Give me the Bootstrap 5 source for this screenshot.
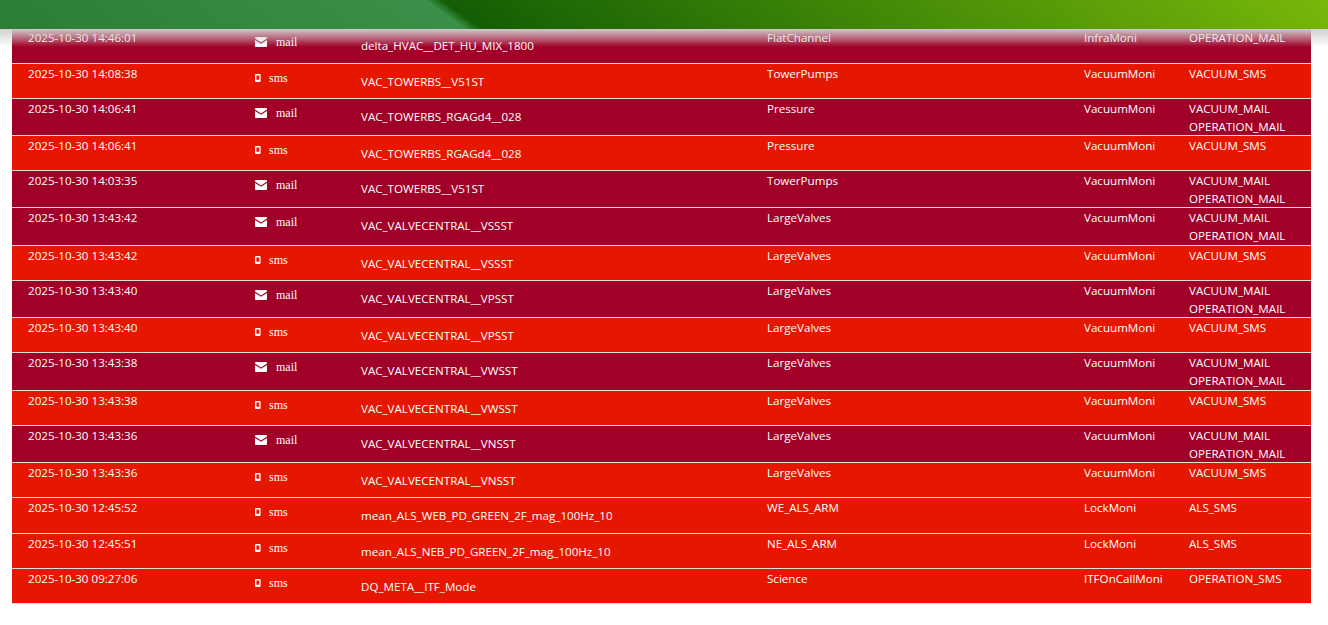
<!DOCTYPE html>
<html lang="en"><head><meta charset="utf-8">
<link href="https://cdn.jsdelivr.net/npm/bootstrap@5.3.0/dist/css/bootstrap.min.css" rel="stylesheet">
<style>
html,body{height:100%;overflow:hidden;background:#fff}
body{font-family:"Open Sans","Noto Sans","Liberation Sans",sans-serif;font-size:11.6px;line-height:18px;color:#fff}
.top-strip{position:fixed;top:0;left:0;right:0;height:29px;z-index:3;background:linear-gradient(36deg,#2c7d36 0,#3a9048 34%,#135e05 35.2%,#78b80a 100%)}
.top-fade{position:fixed;top:29px;left:0;right:0;height:18px;z-index:2;background:linear-gradient(180deg,rgba(208,208,208,.97) 0,rgba(208,208,208,.6) 40%,rgba(208,208,208,0) 100%)}
.page-wrap{padding:28.45px 17px 0 12px}
.alarm-table{table-layout:fixed;width:1299px;border-collapse:separate;border-spacing:0;margin:0}
.alarm-table td{padding:0 16px;vertical-align:top;border-bottom:1px solid #e4dede;color:#fff;background:transparent}
.r-mail{background:#a10028}.r-sms{background:#e61700}
.r-one{height:35.1px}.r-two{height:37.33px}.r-long{height:35.5px}
.w1{width:227px}.w2{width:106px}.w3{width:406px}.w4{width:317px}.w5{width:105px}.w6{width:138px}
.cell-text{padding-top:1px;margin-bottom:-1px}
.cell-name{padding-top:9px;margin-bottom:-9px}
.cell-type{padding-top:5px;margin-bottom:-5px;display:flex;align-items:center;font-family:"Liberation Serif",serif;font-size:12px;line-height:18px}
.ic-mail{width:12px;height:10px;margin-right:9px;flex:none}
.ic-sms{width:6px;height:8px;margin-right:8px;flex:none}
</style></head><body>
<div class="top-strip"></div><div class="top-fade"></div>
<div class="page-wrap">
<table class="alarm-table">
<colgroup><col class="w1"><col class="w2"><col class="w3"><col class="w4"><col class="w5"><col class="w6"></colgroup>
<tbody id="rows"></tbody></table></div>
<script>
const data=[
["2025-10-30 14:46:01","m","delta_HVAC__DET_HU_MIX_1800","FlatChannel","InfraMoni",["OPERATION_MAIL"]],
["2025-10-30 14:08:38","s","VAC_TOWERBS__V51ST","TowerPumps","VacuumMoni",["VACUUM_SMS"]],
["2025-10-30 14:06:41","m","VAC_TOWERBS_RGAGd4__028","Pressure","VacuumMoni",["VACUUM_MAIL","OPERATION_MAIL"]],
["2025-10-30 14:06:41","s","VAC_TOWERBS_RGAGd4__028","Pressure","VacuumMoni",["VACUUM_SMS"]],
["2025-10-30 14:03:35","m","VAC_TOWERBS__V51ST","TowerPumps","VacuumMoni",["VACUUM_MAIL","OPERATION_MAIL"]],
["2025-10-30 13:43:42","m","VAC_VALVECENTRAL__VSSST","LargeValves","VacuumMoni",["VACUUM_MAIL","OPERATION_MAIL"]],
["2025-10-30 13:43:42","s","VAC_VALVECENTRAL__VSSST","LargeValves","VacuumMoni",["VACUUM_SMS"]],
["2025-10-30 13:43:40","m","VAC_VALVECENTRAL__VPSST","LargeValves","VacuumMoni",["VACUUM_MAIL","OPERATION_MAIL"]],
["2025-10-30 13:43:40","s","VAC_VALVECENTRAL__VPSST","LargeValves","VacuumMoni",["VACUUM_SMS"]],
["2025-10-30 13:43:38","m","VAC_VALVECENTRAL__VWSST","LargeValves","VacuumMoni",["VACUUM_MAIL","OPERATION_MAIL"]],
["2025-10-30 13:43:38","s","VAC_VALVECENTRAL__VWSST","LargeValves","VacuumMoni",["VACUUM_SMS"]],
["2025-10-30 13:43:36","m","VAC_VALVECENTRAL__VNSST","LargeValves","VacuumMoni",["VACUUM_MAIL","OPERATION_MAIL"]],
["2025-10-30 13:43:36","s","VAC_VALVECENTRAL__VNSST","LargeValves","VacuumMoni",["VACUUM_SMS"]],
["2025-10-30 12:45:52","s","mean_ALS_WEB_PD_GREEN_2F_mag_100Hz_10","WE_ALS_ARM","LockMoni",["ALS_SMS"]],
["2025-10-30 12:45:51","s","mean_ALS_NEB_PD_GREEN_2F_mag_100Hz_10","NE_ALS_ARM","LockMoni",["ALS_SMS"]],
["2025-10-30 09:27:06","s","DQ_META__ITF_Mode","Science","ITFOnCallMoni",["OPERATION_SMS"]]];
const mail='<svg class="ic-mail" viewBox="0 0 12 10"><path fill="#fff" d="M1 0h10a1 1 0 0 1 1 1v.6L6 5.4 0 1.6V1a1 1 0 0 1 1-1zM0 3l6 3.8L12 3v6a1 1 0 0 1-1 1H1a1 1 0 0 1-1-1z"/></svg>';
const sms='<svg class="ic-sms" viewBox="0 0 6 8"><path fill="#fff" fill-rule="evenodd" d="M1 0h3.6a1 1 0 0 1 1 1v6a1 1 0 0 1-1 1H1a1 1 0 0 1-1-1V1a1 1 0 0 1 1-1zM1.4 1.5v4.2h2.8V1.500z"/></svg>';
document.getElementById('rows').innerHTML=data.map(d=>{
  const h=d[5].length>1?'r-two':(d[2].startsWith('mean')?'r-long':'r-one');
  return `<tr class="${d[1]=='m'?'r-mail':'r-sms'} ${h}"><td><div class="cell-text">${d[0]}</div></td><td><div class="cell-type">${d[1]=='m'?mail+'mail':sms+'sms'}</div></td><td><div class="cell-name">${d[2]}</div></td><td><div class="cell-text">${d[3]}</div></td><td><div class="cell-text">${d[4]}</div></td><td><div class="cell-text">${d[5].join('<br>')}</div></td></tr>`}).join('');
</script>
<script src="https://cdn.jsdelivr.net/npm/bootstrap@5.3.0/dist/js/bootstrap.bundle.min.js"></script>
</body></html>
